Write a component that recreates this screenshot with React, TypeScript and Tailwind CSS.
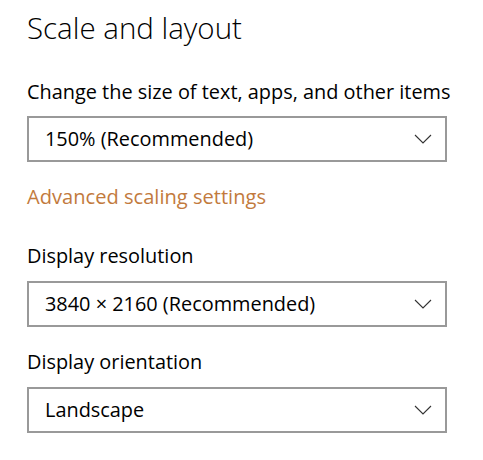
const font = { fontFamily: '"Open Sans", "Noto Sans", sans-serif' };

function Chevron() {
  return (
    <svg width="18" height="10" viewBox="0 0 18 10" fill="none" className="shrink-0">
      <path d="M1 1l8 8 8-8" stroke="#333" strokeWidth="1.1" />
    </svg>
  );
}

function Select({ value }: { value: string }) {
  return (
    <div className="flex h-[46px] w-[420px] items-center justify-between border-2 border-[#999999] bg-white pl-[16px] pr-[13px]">
      <span className="text-[19.9px] leading-[24px] text-black">{value}</span>
      <Chevron />
    </div>
  );
}

export default function App() {
  return (
    <div className="h-[460px] w-[483px] bg-white pl-[27px] pt-[8px]" style={font}>
      <h1 className="text-[29.5px] font-[350] leading-[40px] text-black">Scale and layout</h1>

      <p className="mt-[32px] text-[19.9px] leading-[24px] text-black">
        Change the size of text, apps, and other items
      </p>
      <div className="mt-[12px]">
        <Select value="150% (Recommended)" />
      </div>

      <p className="mt-[23px] text-[20.1px] leading-[24px] text-[#c27a3d]">Advanced scaling settings</p>

      <p className="mt-[35px] text-[19.9px] leading-[24px] text-black">Display resolution</p>
      <div className="mt-[13px]">
        <Select value="3840 × 2160 (Recommended)" />
      </div>

      <p className="mt-[23px] text-[19.9px] leading-[24px] text-black">Display orientation</p>
      <div className="mt-[13px]">
        <Select value="Landscape" />
      </div>
    </div>
  );
}
